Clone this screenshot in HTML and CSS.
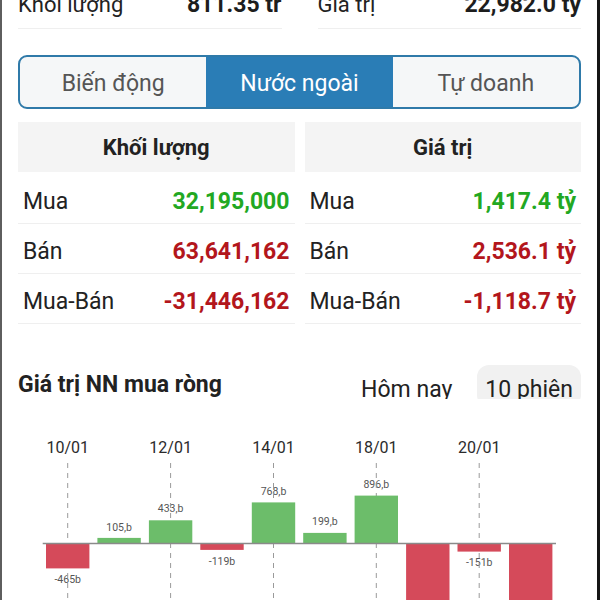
FILE: index.html
```html
<!DOCTYPE html>
<html lang="vi">
<head>
<meta charset="utf-8">
<title>Nước ngoài</title>
<link rel="stylesheet" href="styles.css">
</head>
<body>
<div class="screen">
  <div class="summary">
    <div class="sum-cell"><span class="sum-label">Khối lượng</span><b class="sum-value">811.35 tr</b></div>
    <div class="sum-cell"><span class="sum-label">Giá trị</span><b class="sum-value">22,982.0 tỷ</b></div>
  </div>

  <div class="tabs">
    <div class="tab">Biến động</div>
    <div class="tab active">Nước ngoài</div>
    <div class="tab">Tự doanh</div>
  </div>

  <div class="tables">
    <div class="tbl">
      <div class="tbl-head">Khối lượng</div>
      <div class="row"><span>Mua</span><b class="up">32,195,000</b></div>
      <div class="row"><span>Bán</span><b class="down">63,641,162</b></div>
      <div class="row"><span>Mua-Bán</span><b class="down">-31,446,162</b></div>
    </div>
    <div class="tbl">
      <div class="tbl-head">Giá trị</div>
      <div class="row"><span>Mua</span><b class="up">1,417.4 tỷ</b></div>
      <div class="row"><span>Bán</span><b class="down">2,536.1 tỷ</b></div>
      <div class="row"><span>Mua-Bán</span><b class="down">-1,118.7 tỷ</b></div>
    </div>
  </div>

  <div class="chart-head">
    <h3 class="chart-title">Giá trị NN mua ròng</h3>
    <div class="periods">
      <span class="period">Hôm nay</span>
      <span class="period selected">10 phiên</span>
    </div>
  </div>

  <svg class="chart" width="563" height="201" viewBox="18 399 563 201" xmlns="http://www.w3.org/2000/svg">
    <g class="dates" font-family="Roboto, 'Liberation Sans', sans-serif" font-size="16" fill="#2b2b2b" text-anchor="middle">
      <text x="67.7" y="453">10/01</text>
      <text x="170.6" y="453">12/01</text>
      <text x="273.5" y="453">14/01</text>
      <text x="376.3" y="453">18/01</text>
      <text x="479.2" y="453">20/01</text>
    </g>
    <g font-family="Roboto, 'Liberation Sans', sans-serif" font-size="10.5" fill="#555" text-anchor="middle">
      <text x="67.7" y="582.5">-465b</text>
      <text x="119.1" y="530.5">105,b</text>
      <text x="170.6" y="512.3">433,b</text>
      <text x="222.0" y="564.9">-119b</text>
      <text x="273.5" y="494.8">768,b</text>
      <text x="324.9" y="525">199,b</text>
      <text x="376.3" y="487.6">896,b</text>
      <text x="479.2" y="565.6">-151b</text>
    </g>
    <g stroke="#9a9a9a" stroke-width="1" stroke-dasharray="5 5">
      <line x1="67.7" y1="463" x2="67.7" y2="600"/>
      <line x1="170.6" y1="463" x2="170.6" y2="600"/>
      <line x1="273.5" y1="463" x2="273.5" y2="600"/>
      <line x1="376.3" y1="463" x2="376.3" y2="600"/>
      <line x1="479.2" y1="463" x2="479.2" y2="600"/>
    </g>
    <g>
      <rect x="46" y="543.5" width="43.4" height="24.9" fill="#d54a5a"/>
      <rect x="97.4" y="537.9" width="43.4" height="5.6" fill="#6cbd6a"/>
      <rect x="148.9" y="520.3" width="43.4" height="23.2" fill="#6cbd6a"/>
      <rect x="200.3" y="543.5" width="43.4" height="6.4" fill="#d54a5a"/>
      <rect x="251.8" y="502.4" width="43.4" height="41.1" fill="#6cbd6a"/>
      <rect x="303.2" y="532.9" width="43.4" height="10.6" fill="#6cbd6a"/>
      <rect x="354.6" y="495.6" width="43.4" height="47.9" fill="#6cbd6a"/>
      <rect x="406.1" y="543.5" width="43.4" height="70" fill="#d54a5a"/>
      <rect x="457.5" y="543.5" width="43.4" height="8.1" fill="#d54a5a"/>
      <rect x="509" y="543.5" width="43.4" height="70" fill="#d54a5a"/>
    </g>
    <line x1="42.7" y1="543.5" x2="556" y2="543.5" stroke="#8a8a8a" stroke-width="1.5"/>
  </svg>
</div>
</body>
</html>
```

FILE: styles.css
```css
* {
  box-sizing: border-box;
}

html, body {
  margin: 0;
  padding: 0;
  background: #ffffff;
}

body {
  font-family: Roboto, "Liberation Sans", sans-serif;
  color: #222;
}

.screen {
  width: 600px;
  height: 600px;
  overflow: hidden;
  background: #fff;
  border-left: 2px solid #5e5e5e;
  border-right: 3px solid #161616;
  padding: 0 16px;
}

/* top summary row */
.summary {
  display: grid;
  grid-template-columns: 1fr 1fr;
  column-gap: 36px;
  margin-top: -10px;
}

.sum-cell {
  display: flex;
  justify-content: space-between;
  align-items: baseline;
  font-size: 22px;
  line-height: 30px;
  padding-bottom: 8px;
  border-bottom: 1px solid #efefef;
}

.sum-label {
  color: #222;
}

.sum-value {
  font-weight: 700;
  color: #1d1d1d;
  font-size: 23px;
}

/* segmented tabs */
.tabs {
  margin-top: 26px;
  height: 54px;
  display: flex;
  border: 2px solid #2f7aa9;
  border-radius: 9px;
  overflow: hidden;
  background: #f5f7f8;
}

.tab {
  flex: 1 1 0;
  display: flex;
  align-items: center;
  justify-content: center;
  padding-top: 3px;
  font-size: 23px;
  color: #555;
}

.tab.active {
  background: #2a7db6;
  color: #fff;
}

/* tables */
.tables {
  margin-top: 13px;
  display: grid;
  grid-template-columns: 1fr 1fr;
  column-gap: 10px;
}

.tbl-head {
  height: 50px;
  margin-bottom: 2px;
  background: #f4f4f4;
  display: flex;
  align-items: center;
  justify-content: center;
  padding-top: 1px;
  font-size: 22px;
  font-weight: 700;
  color: #222;
}

.row {
  height: 50px;
  display: flex;
  align-items: center;
  justify-content: space-between;
  padding: 5px 5px 0;
  border-bottom: 1px solid #efefef;
  font-size: 23px;
}

.row span {
  color: #222;
}

.row b {
  font-weight: 700;
}

.up {
  color: #22a822;
}

.down {
  color: #b3161c;
}

/* chart header */
.chart-head {
  margin-top: 41px;
  height: 34px;
  overflow: hidden;
  display: flex;
  justify-content: space-between;
  align-items: flex-start;
}

.chart-title {
  margin: 0;
  padding-top: 6px;
  font-size: 23px;
  line-height: 27px;
  font-weight: 700;
  color: #222;
}

.periods {
  display: flex;
  align-items: flex-start;
  gap: 17px;
}

.period {
  display: block;
  font-size: 23px;
  line-height: 23px;
  padding: 13px 8px 6px;
  color: #222;
  border-radius: 12px;
}

.period.selected {
  background: #f1f1f1;
}

.chart {
  display: block;
}
```
